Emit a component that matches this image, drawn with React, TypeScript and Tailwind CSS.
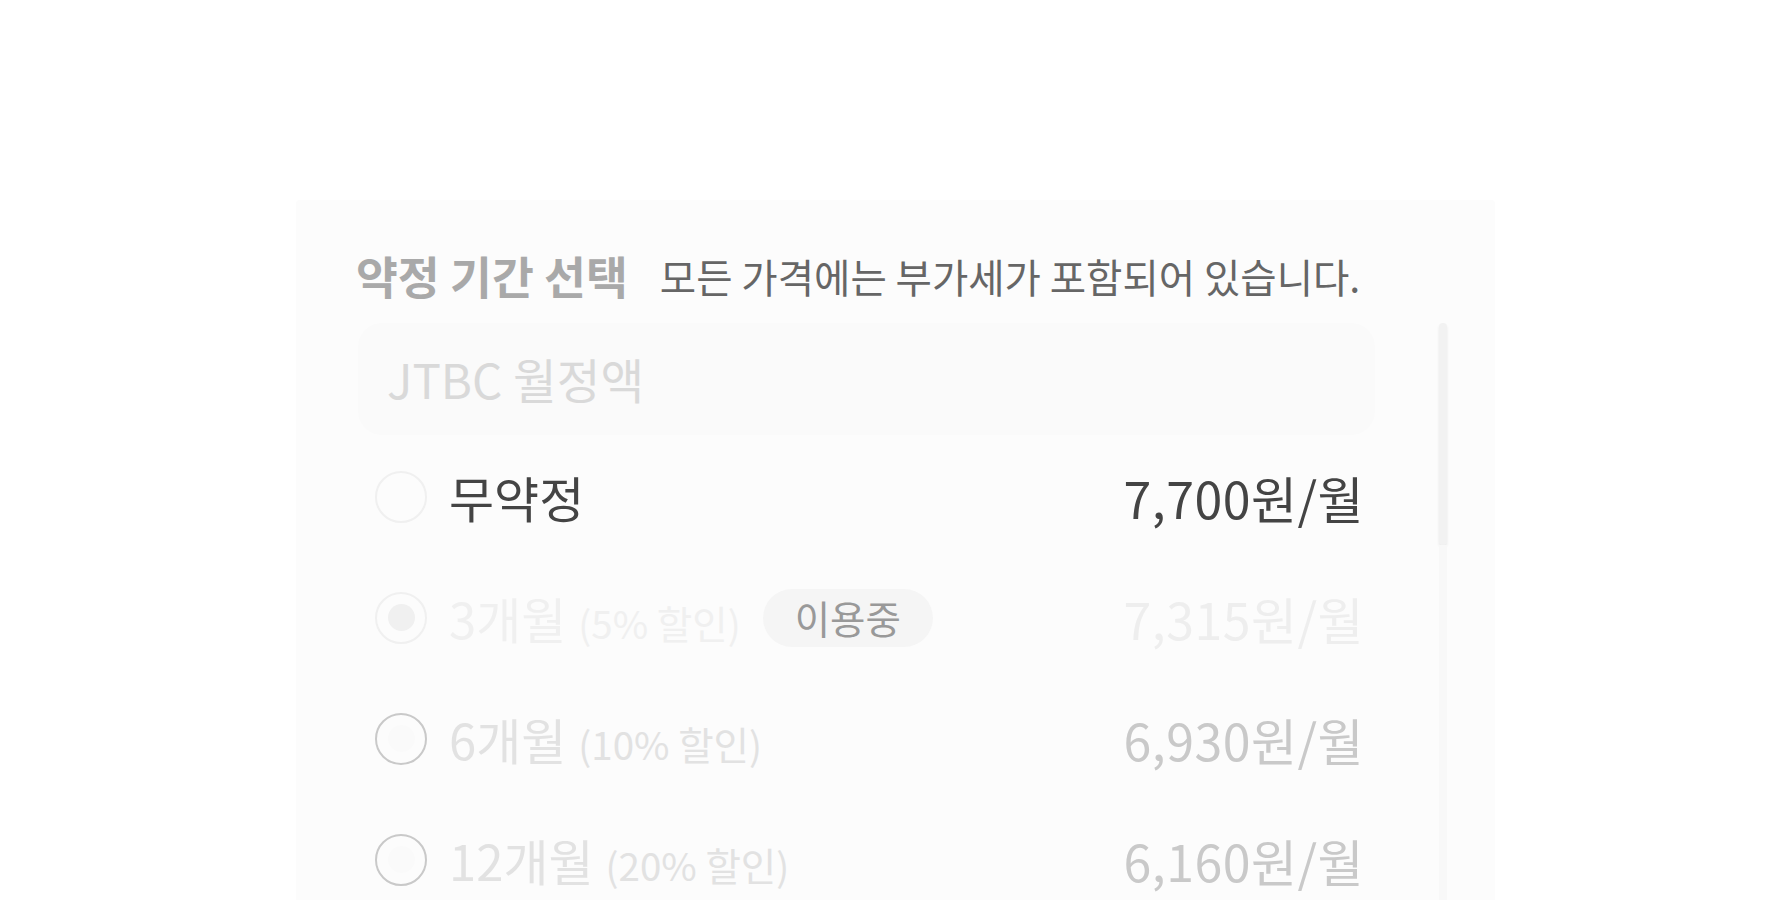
const plans = [
  { label: '3개월', sale: '(5% 할인)', price: '7,315원/월', using: true },
  { label: '6개월', sale: '(10% 할인)', price: '6,930원/월', using: false },
  { label: '12개월', sale: '(20% 할인)', price: '6,160원/월', using: false },
];

const Radio = ({ muted, checked }: { muted?: boolean; checked?: boolean }) => {
  return (
    <span
      className={
        muted
          ? 'w-[52px] h-[52px] shrink-0 rounded-full border-2 border-[#f0f0f0] flex items-center justify-center'
          : 'w-[52px] h-[52px] shrink-0 rounded-full border-2 border-[#c9c9c9] flex items-center justify-center'
      }
    >
      {checked ? (
        <span className="w-[27px] h-[27px] rounded-full bg-[#f0f0f0]" />
      ) : muted ? null : (
        <span className="w-[27px] h-[27px] rounded-full bg-[#fafafa]" />
      )}
    </span>
  );
};

export default function App() {
  return (
    <main className="w-full h-[900px] overflow-hidden bg-white font-['Noto_Sans_CJK_KR','Noto_Sans',sans-serif]">
      <section className="ml-[296px] mt-[200px] w-[1199px] h-[760px] bg-[#fcfcfc] rounded-t-[4px] pl-[60px] pt-[50px]">
        <div className="h-[52px] flex items-center gap-[32px]">
          <h2 className="m-0 text-[45.5px] leading-none font-bold text-[#a9a9a9]">
            약정 기간 선택
          </h2>
          <p className="m-0 text-[39.5px] leading-none text-[#666]">
            모든 가격에는 부가세가 포함되어 있습니다.
          </p>
        </div>

        <div className="mt-[21px] flex">
          <div className="w-[1017px] ml-[2px]">
            <div className="h-[112px] rounded-[24px] bg-[#fafafa] pl-[29px] flex items-center">
              <span className="text-[47.5px] leading-none text-[#d9d9d9]">JTBC 월정액</span>
            </div>

            <div className="mt-[1px]">
              <div className="h-[121px] pl-[17px] pr-[11px] flex items-center justify-between">
                <div className="flex items-center gap-[22px]">
                  <Radio muted />
                  <span className="text-[49px] leading-none text-[#444]">무약정</span>
                </div>
                <span className="text-[50px] leading-none tracking-[0.5px] text-[#444]">7,700원/월</span>
              </div>

              {plans.map((p) => (
                <div key={p.label} className="h-[121px] pl-[17px] pr-[11px] flex items-center justify-between">
                  <div className="flex items-center gap-[22px]">
                    <Radio muted={p.using} checked={p.using} />
                    <span className="flex items-baseline gap-[12px]">
                      <span
                        className={
                          p.using
                            ? 'text-[49px] leading-none text-[#f0f0f0]'
                            : 'text-[49px] leading-none text-[#e2e2e2]'
                        }
                      >
                        {p.label}
                      </span>
                      <span
                        className={
                          p.using
                            ? 'text-[38.5px] leading-none text-[#f0f0f0]'
                            : 'text-[38.5px] leading-none text-[#e2e2e2]'
                        }
                      >
                        {p.sale}
                      </span>
                    </span>
                    {p.using && (
                      <span className="h-[58px] px-[32px] rounded-full bg-[#f5f5f5] flex items-center text-[38.5px] leading-none text-[#999]">
                        이용중
                      </span>
                    )}
                  </div>
                  <span
                    className={
                      p.using
                        ? 'text-[50px] leading-none tracking-[0.5px] text-[#eeeeee]'
                        : 'text-[50px] leading-none tracking-[0.5px] text-[#c9c9c9]'
                    }
                  >
                    {p.price}
                  </span>
                </div>
              ))}
            </div>
          </div>

          <div className="ml-[64px] w-[8px] flex flex-col">
            <div className="h-[222px] rounded-full bg-[#f2f2f2] shadow-[0_2px_3px_rgba(0,0,0,0.08)]" />
            <div className="flex-1 bg-[#f8f8f8]" />
          </div>
        </div>
      </section>
    </main>
  );
}
